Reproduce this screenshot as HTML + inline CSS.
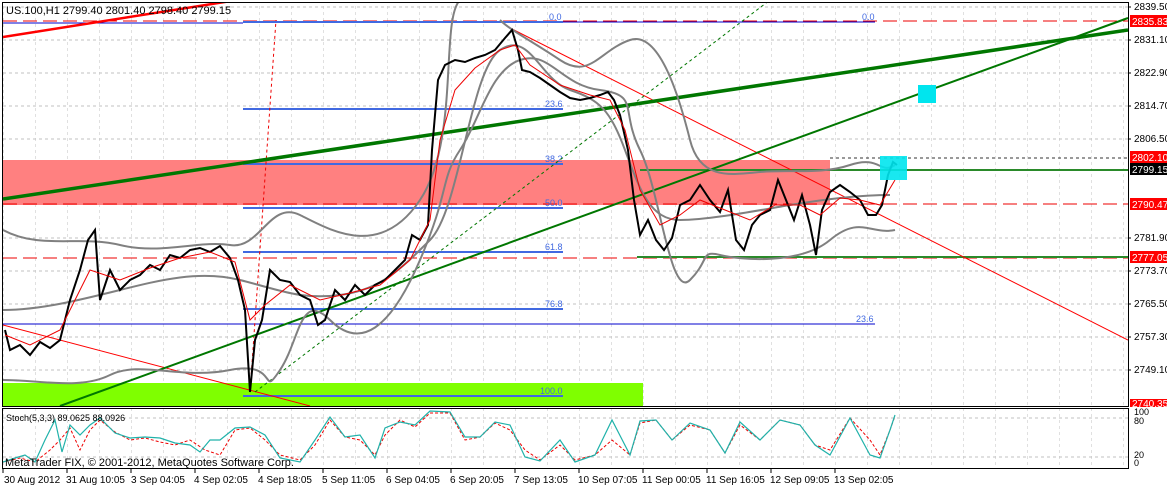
<!DOCTYPE html><html><head><style>
body{margin:0;background:#fff;width:1167px;height:486px;overflow:hidden;font-family:"Liberation Sans",sans-serif}
svg text{font-family:"Liberation Sans",sans-serif}
</style></head><body>
<svg width="1167" height="486" viewBox="0 0 1167 486" xmlns="http://www.w3.org/2000/svg">
<defs>
<pattern id="vg" x="3" y="0" width="32" height="486" patternUnits="userSpaceOnUse"><line x1="0" y1="0" x2="0" y2="486" stroke="#c0c0c0" stroke-dasharray="3,3"/></pattern>
<clipPath id="mc"><rect x="3" y="3" width="1125" height="403"/></clipPath>
<clipPath id="sc"><rect x="3" y="409" width="1125" height="59"/></clipPath>
</defs>
<rect width="1167" height="486" fill="#fff"/>
<rect x="3" y="3" width="1125" height="403" fill="url(#vg)"/>
<rect x="3" y="409" width="1125" height="59" fill="url(#vg)"/>
<g stroke="#c0c0c0" stroke-dasharray="3,3">
<line x1="3" x2="1128" y1="7" y2="7"/><line x1="3" x2="1128" y1="40" y2="40"/><line x1="3" x2="1128" y1="73" y2="73"/><line x1="3" x2="1128" y1="106" y2="106"/><line x1="3" x2="1128" y1="139" y2="139"/><line x1="3" x2="1128" y1="238" y2="238"/><line x1="3" x2="1128" y1="271" y2="271"/><line x1="3" x2="1128" y1="304" y2="304"/><line x1="3" x2="1128" y1="337" y2="337"/><line x1="3" x2="1128" y1="370" y2="370"/>
<line x1="3" x2="1128" y1="418" y2="418"/><line x1="3" x2="1128" y1="457" y2="457"/>
</g>
<g clip-path="url(#mc)">
<rect x="3" y="160" width="827" height="45" fill="#ff8080"/>
<rect x="3" y="383" width="640" height="23" fill="#7fff00"/>
<line x1="3" x2="1128" y1="21" y2="21" stroke="#e00" stroke-dasharray="14,6"/>
<line x1="3" x2="243" y1="23" y2="23" stroke="#00c"/>
<line x1="3" x2="1128" y1="204" y2="204" stroke="#e00" stroke-dasharray="14,6"/>
<line x1="3" x2="1128" y1="258" y2="258" stroke="#e00" stroke-dasharray="14,6"/>
<line x1="830" x2="1128" y1="158" y2="158" stroke="#333" stroke-dasharray="3,3"/>
<line x1="640" x2="1128" y1="170" y2="170" stroke="#2a8a2a" stroke-width="2"/>
<line x1="637" x2="1128" y1="257" y2="257" stroke="#2a8a2a" stroke-width="2"/>
<g stroke="#4169e1" stroke-width="2">
<line x1="243" x2="563" y1="22" y2="22"/><line x1="243" x2="563" y1="109" y2="109"/><line x1="243" x2="563" y1="164" y2="164"/><line x1="243" x2="563" y1="208" y2="208"/><line x1="243" x2="563" y1="252" y2="252"/><line x1="243" x2="563" y1="309" y2="309"/><line x1="243" x2="563" y1="396" y2="396"/>
</g>
<line x1="563" x2="875" y1="22" y2="22" stroke="#00c"/>
<line x1="3" x2="875" y1="324" y2="324" stroke="#00c"/>
<g fill="#4169e1" font-size="9">
<text x="549" y="20">0.0</text><text x="545" y="107">23.6</text><text x="545" y="162">38.2</text><text x="545" y="206">50.0</text><text x="545" y="250">61.8</text><text x="545" y="307">76.8</text><text x="540" y="394">100.0</text>
<text x="862" y="20">0.0</text><text x="856" y="322">23.6</text>
</g>
<line x1="3" y1="37" x2="250" y2="-2" stroke="#f00" stroke-width="2.5"/>
<line x1="510" y1="28" x2="1128" y2="340" stroke="#f00"/>
<line x1="3" y1="325" x2="310" y2="406" stroke="#f00"/>
<line x1="250" y1="392" x2="276" y2="20" stroke="#e00" stroke-dasharray="3,3"/>
<line x1="255" y1="392" x2="770" y2="0" stroke="#070" stroke-dasharray="3,3"/>
<line x1="3" y1="199" x2="1128" y2="30" stroke="#070" stroke-width="3.5"/>
<line x1="60" y1="406" x2="1128" y2="18" stroke="#070" stroke-width="2"/>
<g fill="none" stroke="#808080" stroke-width="2">
<path d="M3,230 C40,250 80,235 120,245 S200,240 230,245 S270,200 300,215 S380,260 420,200 S440,20 460,0 M500,20 C510,30 530,40 560,60 S600,50 630,40 S680,100 690,140 S730,175 760,172 S820,175 850,165 S880,175 895,165"/>
<path d="M3,380 C40,380 80,390 110,375 S180,380 230,370 S260,400 280,370 S300,290 330,320 S390,330 420,260 S440,180 460,150 S490,70 520,60 S560,85 600,90 S620,110 640,150 S670,300 690,280 S700,250 720,255 S800,265 830,240 S870,235 895,230"/>
<path d="M3,310 C40,310 80,300 120,290 S200,270 240,280 S300,300 340,295 S400,270 430,240 S470,70 500,50 S540,80 570,90 S610,110 625,150 S650,220 680,220 S760,210 790,205 S860,195 890,195"/>
</g>
<polyline fill="none" stroke="#000" stroke-width="2" points="5,330 10,350 20,345 30,355 40,342 50,348 60,340 70,300 80,270 88,240 95,230 100,300 110,270 120,290 130,280 140,275 150,265 160,270 170,255 180,258 190,250 200,248 210,252 220,246 230,258 238,280 245,310 250,392 255,340 262,320 270,270 280,280 290,282 300,295 310,300 318,325 325,320 335,290 345,300 355,285 365,295 375,285 385,280 395,270 405,260 412,235 420,240 428,225 432,150 438,80 445,65 455,60 465,62 475,58 485,55 495,50 505,38 512,30 518,50 522,70 530,72 540,78 550,85 560,92 570,98 580,100 590,98 600,95 608,92 614,100 620,115 628,150 634,200 640,235 648,220 656,240 664,250 672,238 680,205 690,200 700,185 710,200 720,212 728,190 736,240 744,250 752,225 760,215 770,210 778,180 786,200 794,220 802,195 810,225 816,255 822,210 830,192 840,185 850,192 860,200 868,215 876,215 882,205 888,175 893,162 897,165"/>
<polyline fill="none" stroke="#e00" stroke-width="1" points="5,335 30,345 60,330 90,270 120,280 150,268 180,258 210,252 235,262 250,320 265,305 290,285 320,300 350,293 380,285 410,260 430,220 440,140 455,90 475,68 500,50 515,45 530,65 560,85 590,95 610,100 625,130 640,190 660,225 680,215 700,200 725,210 750,220 775,205 800,205 820,215 840,198 860,200 880,205 895,180"/>
<rect x="918" y="85" width="18" height="18" fill="#00e5ee"/>
<rect x="880" y="156" width="27" height="24" fill="#00e5ee" opacity="0.9"/>
</g>
<text x="6" y="14" font-size="11" fill="#000">US.100,H1  2799.40 2801.40 2798.40 2799.15</text>
<g clip-path="url(#sc)">
<polyline fill="none" stroke="#e00" stroke-dasharray="3,2" points="3,462 20,458 35,462 50,450 60,440 70,428 80,450 90,430 100,420 115,432 130,440 145,438 160,442 175,445 190,440 205,450 220,455 235,430 250,428 265,440 280,455 300,460 315,445 330,420 345,437 360,440 375,455 385,435 400,420 415,427 430,413 450,413 465,440 480,437 495,423 510,430 525,450 540,460 560,445 575,460 595,455 612,440 630,455 640,423 656,420 672,440 690,425 710,430 725,453 740,425 760,440 780,420 800,425 815,445 830,450 850,418 870,440 880,455 890,430 895,416"/>
<polyline fill="none" stroke="#20b2aa" stroke-width="1.2" points="3,462 15,458 25,455 35,462 45,440 55,420 62,452 70,425 80,435 90,425 100,418 115,433 130,438 145,437 160,438 175,443 190,445 200,452 210,440 220,440 235,428 250,427 265,435 280,458 300,462 315,440 330,417 345,437 360,435 375,458 385,428 400,422 415,425 430,411 450,412 465,437 480,437 495,422 510,425 525,457 540,461 560,440 575,462 595,455 612,420 630,455 640,421 656,420 672,440 690,423 710,430 725,453 740,422 760,440 780,420 800,425 815,445 830,455 850,418 870,455 880,458 890,430 895,415"/>
</g>
<text x="6" y="421" font-size="9" fill="#000">Stoch(5,3,3) 89.0625 88.0926</text>
<text x="5" y="466" font-size="11" fill="#000">MetaTrader FIX, © 2001-2012, MetaQuotes Software Corp.</text>
<rect x="2.5" y="2.5" width="1126" height="404" fill="none" stroke="#000"/>
<rect x="2.5" y="408.5" width="1126" height="60" fill="none" stroke="#000"/>
<g font-size="10" fill="#000">
<text x="1134" y="10">2839.50</text><text x="1134" y="43">2831.10</text><text x="1134" y="76">2822.90</text><text x="1134" y="109">2814.70</text><text x="1134" y="142">2806.50</text><text x="1134" y="241">2781.90</text><text x="1134" y="274">2773.70</text><text x="1134" y="307">2765.50</text><text x="1134" y="340">2757.30</text><text x="1134" y="373">2749.10</text>
<text x="1134" y="415" font-size="9">100</text><text x="1134" y="424" font-size="9">80</text><text x="1134" y="458" font-size="9">20</text><text x="1134" y="466" font-size="9">0</text>
</g>
<g stroke="#000"><line x1="1128" x2="1131" y1="7" y2="7"/><line x1="1128" x2="1131" y1="40" y2="40"/><line x1="1128" x2="1131" y1="73" y2="73"/><line x1="1128" x2="1131" y1="106" y2="106"/><line x1="1128" x2="1131" y1="139" y2="139"/><line x1="1128" x2="1131" y1="238" y2="238"/><line x1="1128" x2="1131" y1="271" y2="271"/><line x1="1128" x2="1131" y1="304" y2="304"/><line x1="1128" x2="1131" y1="337" y2="337"/><line x1="1128" x2="1131" y1="370" y2="370"/></g>
<g font-size="10" fill="#fff">
<rect x="1130" y="15" width="37" height="12" fill="#f00"/><text x="1132" y="25">2835.83</text>
<rect x="1130" y="151" width="37" height="12" fill="#f00"/><text x="1132" y="161">2802.10</text>
<rect x="1130" y="163" width="37" height="12" fill="#000"/><text x="1132" y="173">2799.15</text>
<rect x="1130" y="198" width="37" height="12" fill="#f00"/><text x="1132" y="208">2790.47</text>
<rect x="1130" y="251" width="37" height="12" fill="#f00"/><text x="1132" y="261">2777.05</text>
<rect x="1130" y="399" width="37" height="8" fill="#f00"/><text x="1132" y="407">2740.35</text>
</g>
<g stroke="#000"><line x1="3" x2="3" y1="469" y2="473"/><line x1="67" x2="67" y1="469" y2="473"/><line x1="131" x2="131" y1="469" y2="473"/><line x1="195" x2="195" y1="469" y2="473"/><line x1="259" x2="259" y1="469" y2="473"/><line x1="323" x2="323" y1="469" y2="473"/><line x1="387" x2="387" y1="469" y2="473"/><line x1="451" x2="451" y1="469" y2="473"/><line x1="515" x2="515" y1="469" y2="473"/><line x1="579" x2="579" y1="469" y2="473"/><line x1="643" x2="643" y1="469" y2="473"/><line x1="707" x2="707" y1="469" y2="473"/><line x1="771" x2="771" y1="469" y2="473"/><line x1="835" x2="835" y1="469" y2="473"/></g>
<g font-size="10" fill="#000">
<text x="4" y="483">30 Aug 2012</text><text x="66" y="483">31 Aug 10:05</text><text x="131" y="483">3 Sep 04:05</text><text x="194" y="483">4 Sep 02:05</text><text x="258" y="483">4 Sep 18:05</text><text x="322" y="483">5 Sep 11:05</text><text x="386" y="483">6 Sep 04:05</text><text x="450" y="483">6 Sep 20:05</text><text x="514" y="483">7 Sep 13:05</text><text x="578" y="483">10 Sep 07:05</text><text x="642" y="483">11 Sep 00:05</text><text x="706" y="483">11 Sep 16:05</text><text x="770" y="483">12 Sep 09:05</text><text x="834" y="483">13 Sep 02:05</text>
</g>
</svg>
</body></html>
